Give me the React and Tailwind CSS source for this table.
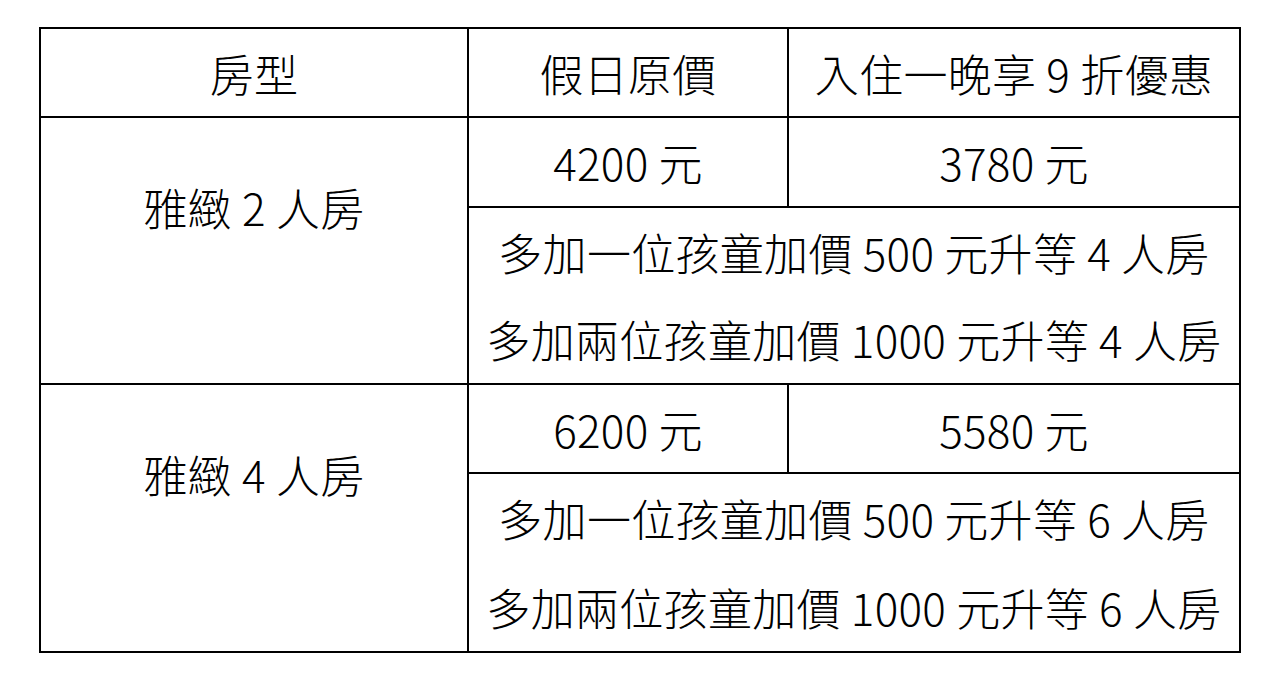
import React from "react";

const font = { fontFamily: '"Noto Sans CJK TC", "Noto Sans", sans-serif' };

const cell = "flex items-center justify-center border-r-2 border-b-2 border-black leading-none whitespace-nowrap";

function PlanBlock({ name, price, discount, one, two }) {
  return (
    <>
      <div className={`${cell} row-span-2 flex-col`}>
        <div className="h-[88px] flex items-center">{name}</div>
        <div className="h-[88px]" />
      </div>
      <div className={cell}>{price}</div>
      <div className={cell}>{discount}</div>
      <div className={`${cell} col-span-2 flex-col`}>
        <div className="flex-1 flex items-center">{one}</div>
        <div className="flex-1 flex items-center">{two}</div>
      </div>
    </>
  );
}

export default function App() {
  return (
    <div className="w-[1280px] h-[688px] bg-white text-black overflow-hidden" style={font}>
      <div className="ml-[39px] mt-[27px] inline-grid grid-cols-[428px_320px_452px] grid-rows-[89px_90px_177px_89px_179px] border-t-2 border-l-2 border-black text-[44px] font-light tracking-[0.3px]">
        {/* 表頭 */}
        <div className={cell}>房型</div>
        <div className={cell}>假日原價</div>
        <div className={cell}>入住一晚享 9 折優惠</div>

        <PlanBlock
          name="雅緻 2 人房"
          price="4200 元"
          discount="3780 元"
          one="多加一位孩童加價 500 元升等 4 人房"
          two="多加兩位孩童加價 1000 元升等 4 人房"
        />
        <PlanBlock
          name="雅緻 4 人房"
          price="6200 元"
          discount="5580 元"
          one="多加一位孩童加價 500 元升等 6 人房"
          two="多加兩位孩童加價 1000 元升等 6 人房"
        />
      </div>
    </div>
  );
}
